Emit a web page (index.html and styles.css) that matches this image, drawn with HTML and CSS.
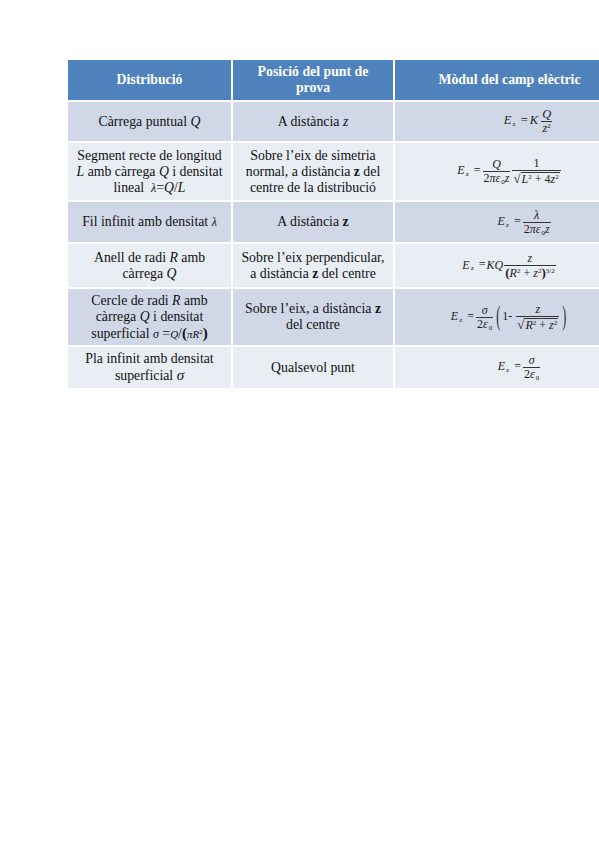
FILE: index.html
```html
<!DOCTYPE html>
<html lang="ca">
<head>
<meta charset="utf-8">
<title>Camp elèctric</title>
<link rel="stylesheet" href="styles.css">
</head>
<body>
<div class="page">
  <div class="tbl">
    <div class="cell head"><div class="txt">Distribució</div></div>
    <div class="cell head"><div class="txt">Posició del punt de prova</div></div>
    <div class="cell head"><div class="txt">Mòdul del camp elèctric</div></div>

    <div class="cell odd"><div class="txt">Càrrega puntual <i>Q</i></div></div>
    <div class="cell odd"><div class="txt">A distància <i>z</i></div></div>
    <div class="cell odd"><div class="txt eq eq-r1"><i>E</i><sub>z</sub> <span class="op">=</span><i>K</i><span class="frac"><span class="num"><i>Q</i></span><span class="den"><i>z</i><sup>2</sup></span></span></div></div>

    <div class="cell even"><div class="txt">Segment recte de longitud <i>L</i> amb càrrega <i>Q</i> i densitat lineal&nbsp; <i class="sym">λ</i>=<i>Q</i>/<i>L</i></div></div>
    <div class="cell even"><div class="txt">Sobre l’eix de simetria normal, a distància <b>z</b> del centre de la distribució</div></div>
    <div class="cell even"><div class="txt eq eq-r2"><i>E</i><sub>z</sub> <span class="op">=</span><span class="frac"><span class="num"><i>Q</i></span><span class="den">2<i>πε</i><sub>0</sub><i>z</i></span></span><span class="frac"><span class="num">1</span><span class="den"><span class="rs">√</span><span class="rad"><i>L</i><sup>2</sup> + 4<i>z</i><sup>2</sup></span></span></span></div></div>

    <div class="cell odd"><div class="txt">Fil infinit amb densitat <i class="sym">λ</i></div></div>
    <div class="cell odd"><div class="txt">A distància <b>z</b></div></div>
    <div class="cell odd"><div class="txt eq eq-r3"><i>E</i><sub>z</sub> <span class="op">=</span><span class="frac"><span class="num"><i>λ</i></span><span class="den">2<i>πε</i><sub>0</sub><i>z</i></span></span></div></div>

    <div class="cell even"><div class="txt">Anell de radi <i>R</i> amb càrrega <i>Q</i></div></div>
    <div class="cell even"><div class="txt">Sobre l’eix perpendicular, a distància <b>z</b> del centre</div></div>
    <div class="cell even"><div class="txt eq eq-r4"><i>E</i><sub>z</sub> <span class="op">=</span><i>KQ</i><span class="frac"><span class="num"><i>z</i></span><span class="den"><span class="bp">(</span><i>R</i><sup>2</sup> + <i>z</i><sup>2</sup><span class="bp">)</span><sup>3/2</sup></span></span></div></div>

    <div class="cell odd"><div class="txt">Cercle de radi <i>R</i> amb càrrega <i>Q</i> i densitat superficial <i class="sym">σ</i> =<i class="sm">Q</i>/<span class="bp">(</span><i class="sm">πR</i><sup>2</sup><span class="bp">)</span></div></div>
    <div class="cell odd"><div class="txt">Sobre l’eix, a distància <b>z</b> del centre</div></div>
    <div class="cell odd"><div class="txt eq eq-r5"><i>E</i><sub>z</sub> <span class="op">=</span><span class="frac"><span class="num"><i>σ</i></span><span class="den">2<i>ε</i><sub>0</sub></span></span><span class="tp">(</span>1- <span class="frac"><span class="num"><i>z</i></span><span class="den"><span class="rs">√</span><span class="rad"><i>R</i><sup>2</sup> + <i>z</i><sup>2</sup></span></span></span><span class="tp">)</span></div></div>

    <div class="cell even"><div class="txt">Pla infinit amb densitat superficial <i class="sig">σ</i></div></div>
    <div class="cell even"><div class="txt">Qualsevol punt</div></div>
    <div class="cell even"><div class="txt eq eq-r6"><i>E</i><sub>z</sub> <span class="op">=</span><span class="frac"><span class="num"><i>σ</i></span><span class="den">2<i>ε</i><sub>0</sub></span></span></div></div>
  </div>
</div>
</body>
</html>
```

FILE: styles.css
```css
* { box-sizing: border-box; }
html, body { margin: 0; padding: 0; background: #fff; }
.page { width: 599px; height: 848px; overflow: hidden; }
.tbl {
  display: grid;
  grid-template-columns: 163px 160px 229px;
  grid-template-rows: 40px 39px 57px 40px 43px 56px 41px;
  gap: 2px;
  margin: 60px 0 0 68px;
  width: 556px;
  font-family: "Liberation Serif", "Times New Roman", serif;
  font-size: 13.8px;
  line-height: 16px;
  color: #111;
}
.cell {
  display: flex;
  align-items: center;
  justify-content: center;
  text-align: center;
  padding: 0 6px;
}
.head { background: #4f81bd; color: #fff; font-weight: bold; }
.odd { background: #d0d8e8; }
.even { background: #e9edf4; }
.sym { font-size: 12px; }
.sig { font-size: 15px; }
.sm { font-size: 11px; }
.bp { font-weight: bold; font-size: 15px; }
.txt sup { font-size: 7px; vertical-align: 4px; line-height: 0; }

.eq { font-size: 12px; line-height: 11px; white-space: nowrap; color: #222; }
.eq sub { font-size: 7px; vertical-align: -2px; line-height: 0; margin-left: 1px; }
.eq sup { font-size: 7px; vertical-align: 4px; line-height: 0; }
.eq .op { margin: 0 1px 0 2px; }
.frac {
  display: inline-flex;
  flex-direction: column;
  vertical-align: middle;
  text-align: center;
  margin: 0 1px;
}
.frac > span { line-height: 11px; display: block; }
.num { border-bottom: 1px solid #333; padding: 0 1px 1px; }
.den { padding: 1px 1px 0; }
.rs { font-size: 13px; }
.rad { border-top: 1px solid #333; padding: 1px 1px 0; display: inline-block; line-height: 10px; }
.eq .bp { font-size: 13px; }
.tp { display: inline-block; font-size: 12px; transform: scaleY(2.2); vertical-align: middle; margin: 0 2px; }

.eq-r1 { margin-left: 38px; font-size: 12.5px; }
.eq-r1 .op { margin-right: 2px; }
.eq-r1 .frac { margin-left: 3px; }
.eq-r2 { margin-left: 0; }
.eq-r3 { margin-left: 30px; }
.eq-r4 { margin-left: 0; }
.eq-r5 { margin-left: 0; }
.eq-r6 { margin-left: 20px; }
```
